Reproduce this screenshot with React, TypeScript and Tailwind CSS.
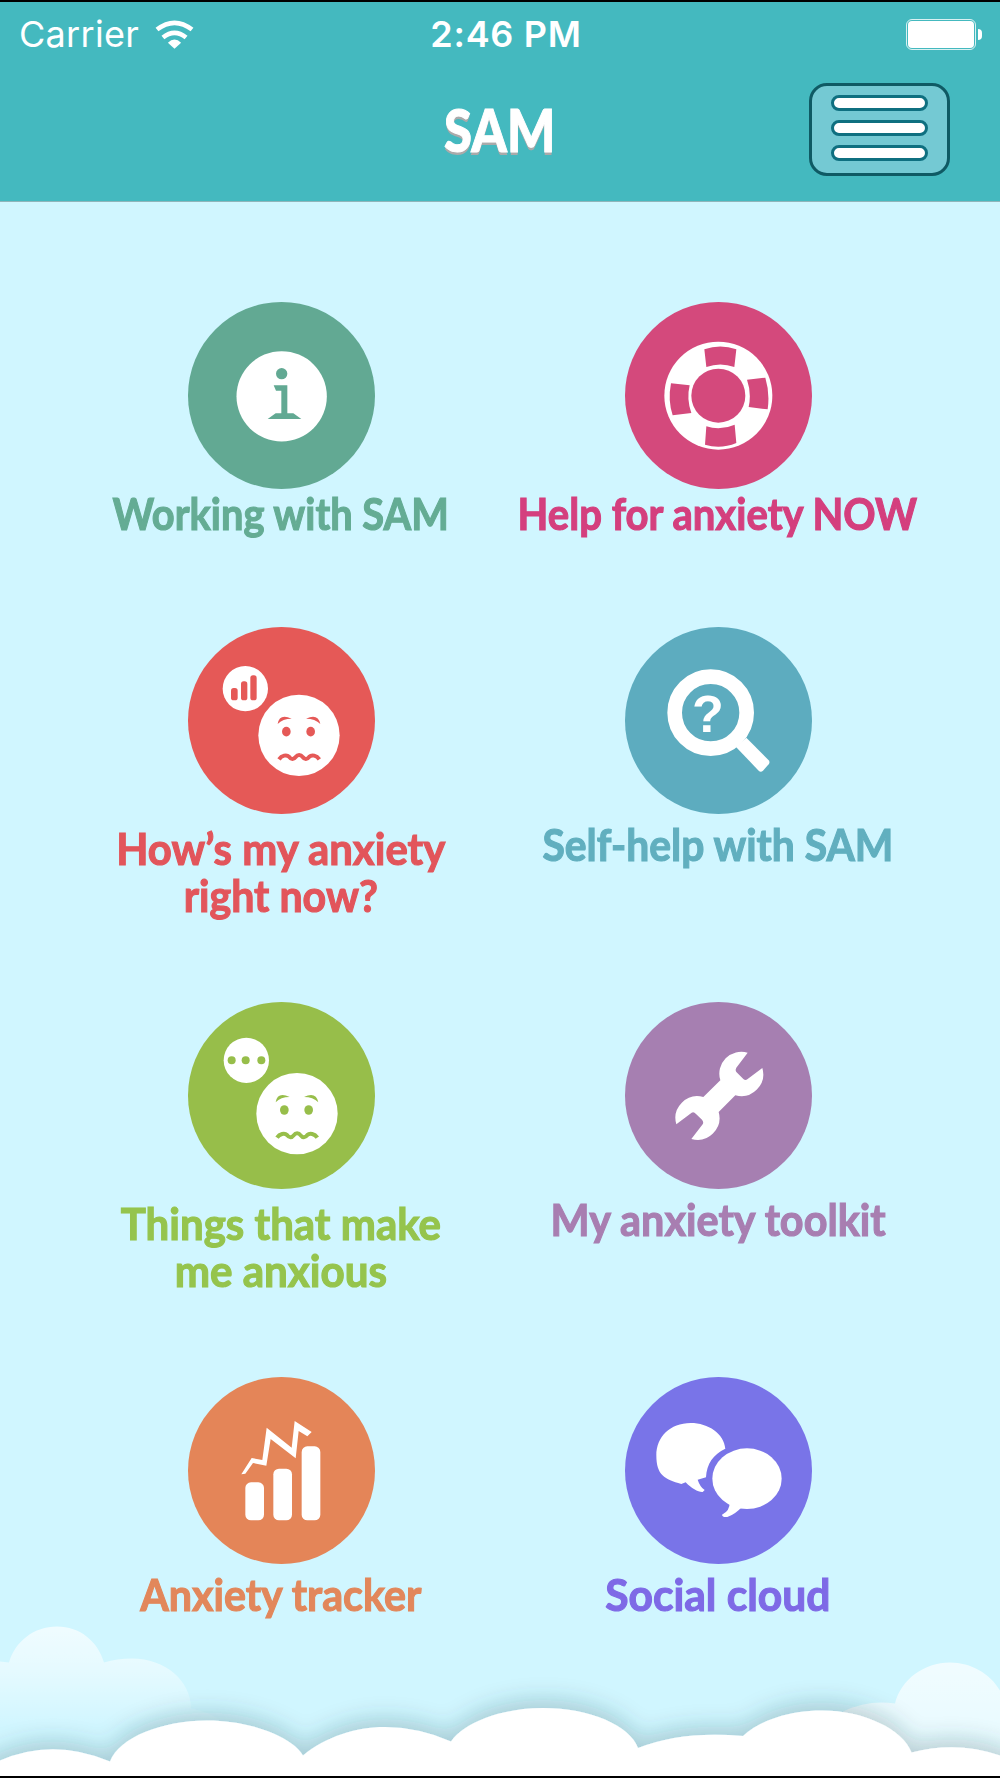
import type { ReactNode } from "react";

function WorriedFace({ color }: { color: string }) {
  return (
    <g>
      <circle cx="597" cy="375" r="122" fill="white" />
      <ellipse cx="559" cy="364" rx="13" ry="14.5" fill={color} />
      <ellipse cx="632" cy="364" rx="13" ry="14.5" fill={color} />
      <path d="M533 341 Q538 308 575 325 Q548 325 533 341Z" fill={color} />
      <path d="M661 341 Q654 308 618 325 Q645 325 661 341Z" fill={color} />
      <path
        d="M537 447 C545 435 560 432 567 439 C574 448 581 448 587 440 C593 432 602 432 608 440 C614 448 621 448 628 439 C635 432 650 435 658 447"
        fill="none"
        stroke={color}
        strokeWidth="12"
      />
    </g>
  );
}

const infoIcon = (
  <svg viewBox="264 35 561 561" className="size-full">
    <circle cx="545" cy="318" r="135.5" fill="white" />
    <g fill="#62a993">
      <circle cx="545" cy="250" r="17" />
      <path d="M521 285 H562 V369 H580 L604 386 H503 L527 369 H544 V301 H528Z" />
    </g>
  </svg>
);

const lifebuoyIcon = (
  <svg viewBox="376 35 561 561" className="size-full">
    <circle cx="656" cy="316" r="162" fill="white" />
    <g fill="#d4497c">
      <circle cx="656" cy="316" r="81" />
      <path d="M614 177 Q662 160 710 177 L704 230 Q662 215 620 230Z" />
      <path d="M742 268 L797 262 Q811 308 804 357 L747 350 Q756 308 742 268Z" />
      <path d="M620 408 Q662 422 705 403 L710 458 Q662 478 616 463Z" />
      <path d="M514 279 L570 285 Q560 326 575 368 L519 375 Q504 330 514 279Z" />
    </g>
  </svg>
);

const anxietyNowIcon = (
  <svg viewBox="264 50 561 561" className="size-full">
    <circle cx="436" cy="235" r="68" fill="white" />
    <g fill="#e55957">
      <rect x="393" y="233" width="20" height="37" rx="8" />
      <rect x="423" y="213" width="19" height="57" rx="8" />
      <rect x="451" y="195" width="19" height="75" rx="8" />
    </g>
    <WorriedFace color="#e55957" />
  </svg>
);

const searchIcon = (
  <svg viewBox="315 50 561 561" className="size-full">
    <circle cx="572" cy="307" r="108" fill="none" stroke="white" strokeWidth="44" />
    <path d="M679 382 L746 450 Q751 456 746 462 L729 481 Q722 487 716 481 L648 410Z" fill="white" />
    <text
      x="564"
      y="366"
      textAnchor="middle"
      fill="white"
      className="font-['Liberation_Sans',sans-serif] text-[156px] font-bold"
    >
      ?
    </text>
  </svg>
);

const thingsIcon = (
  <svg viewBox="264 35 561 561" className="size-full">
    <circle cx="439" cy="210" r="68" fill="white" />
    <g fill="#97be4a">
      <circle cx="395" cy="210" r="12" />
      <circle cx="437" cy="210" r="12" />
      <circle cx="484" cy="210" r="12" />
    </g>
    <g transform="translate(-6 -5)">
      <WorriedFace color="#97be4a" />
    </g>
  </svg>
);

const wrenchIcon = (
  <svg viewBox="315 35 561 561" className="size-full">
    <path
      d="M683 187 A66 66 0 0 0 601 270 L550 320 A66 66 0 0 0 469 402 L515 367 Q522 364 528 371 L546 388 Q552 395 548 402 L514 446 A66 66 0 0 0 596 365 L646 315 A66 66 0 0 0 727 233 L682 267 Q676 271 670 266 L649 245 Q645 239 649 232Z"
      fill="white"
    />
  </svg>
);

const trackerIcon = (
  <svg viewBox="264 50 561 561" className="size-full">
    <g fill="white">
      <rect x="436" y="366" width="56" height="114" rx="17" />
      <rect x="520" y="325" width="56" height="155" rx="17" />
      <rect x="605" y="258" width="56" height="222" rx="17" />
      <path d="M424 342 L455 293 L487 299 L500 202 L575 262 L584 182 L635 215 L622 228 L596 212 L587 294 L512 236 L499 316 L459 308 L436 340Z" />
    </g>
  </svg>
);

const socialIcon = (
  <svg viewBox="315 50 561 561" className="size-full">
    <g fill="white">
      <path d="M616 265 C612 220 565 188 512 188 C450 188 409 230 409 285 C409 345 434 357 484 371 L497 366 C515 385 535 396 548 395 L554 389 Q540 380 533 358 L558 351 C560 310 580 282 616 265Z" />
      <ellipse cx="681" cy="355" rx="104" ry="91" />
      <path d="M629 425 Q630 452 606 463 Q607 472 622 470 Q645 463 668 438Z" />
    </g>
  </svg>
);

type Line = { text: string; scale: string };

type MenuItem = {
  circle: string;
  label: string;
  lines: Line[];
  icon: ReactNode;
};

const menuItems: MenuItem[] = [
  {
    circle: "bg-[#62a993]",
    label: "mt-[1.5px] text-[#64ac94]",
    lines: [{ text: "Working with SAM", scale: "scale-x-[0.926]" }],
    icon: infoIcon,
  },
  {
    circle: "bg-[#d4497c]",
    label: "mt-[1.5px] text-[#d43f7e]",
    lines: [{ text: "Help for anxiety NOW", scale: "scale-x-[0.932]" }],
    icon: lifebuoyIcon,
  },
  {
    circle: "bg-[#e55957]",
    label: "mt-[11px] text-[#e2555b]",
    lines: [
      { text: "How’s my anxiety", scale: "scale-x-[0.975]" },
      { text: "right now?", scale: "scale-x-[0.957]" },
    ],
    icon: anxietyNowIcon,
  },
  {
    circle: "bg-[#5dacbf]",
    label: "mt-[7px] text-[#61afbf]",
    lines: [{ text: "Self-help with SAM", scale: "scale-x-[0.949]" }],
    icon: searchIcon,
  },
  {
    circle: "bg-[#97be4a]",
    label: "mt-[11px] text-[#95c44d]",
    lines: [
      { text: "Things that make", scale: "scale-x-[0.977]" },
      { text: "me anxious", scale: "scale-x-[0.98]" },
    ],
    icon: thingsIcon,
  },
  {
    circle: "bg-[#a67fb1]",
    label: "mt-[7px] text-[#a87eb1]",
    lines: [{ text: "My anxiety toolkit", scale: "scale-x-[0.962]" }],
    icon: wrenchIcon,
  },
  {
    circle: "bg-[#e48558]",
    label: "mt-[7px] text-[#e2875b]",
    lines: [{ text: "Anxiety tracker", scale: "scale-x-[0.958]" }],
    icon: trackerIcon,
  },
  {
    circle: "bg-[#7974e8]",
    label: "mt-[7px] text-[#7e6ae6]",
    lines: [{ text: "Social cloud", scale: "scale-x-[0.99]" }],
    icon: socialIcon,
  },
];

function StatusBar() {
  return (
    <div className="grid h-16 grid-cols-3 items-center font-['Inter',sans-serif] text-[36px] leading-none text-white">
      <div className="flex items-center gap-4 pl-[19px]">
        <span className="font-normal tracking-[0.3px]">Carrier</span>
        <svg viewBox="468 50 118 92" className="h-[31px] w-[39px]">
          <g fill="none" stroke="white" strokeWidth="14">
            <path d="M474 81 Q527 40 580 81" />
            <path d="M492 105 Q527 77 562 105" />
          </g>
          <path d="M507 121 Q527 102 547 121 L527 139Z" fill="white" />
        </svg>
      </div>
      <span className="pl-3 text-center font-semibold tracking-[0.7px]">2:46 PM</span>
      <div className="flex items-center justify-end gap-0.5 pr-[18px]">
        <div className="h-[31px] w-[70px] rounded-md border border-white/80 p-px">
          <div className="size-full rounded-[4px] bg-white" />
        </div>
        <div className="h-[11px] w-1 rounded-r-full bg-white" />
      </div>
    </div>
  );
}

function MenuButton() {
  return (
    <button className="flex h-[93px] w-[141px] flex-col items-center justify-between rounded-[18px] border-[3px] border-[#0f5a64] bg-[#74c9d3] pt-[9px] pb-3">
      {[0, 1, 2].map((n) => (
        <span
          key={n}
          className="h-4 w-[97px] rounded-full border-[3px] border-[#0f7080] bg-white"
        />
      ))}
    </button>
  );
}

function Clouds() {
  return (
    <svg viewBox="0 1615.5 1000 160" className="h-[160px] w-full">
      <defs>
        <linearGradient id="leftCloud" gradientUnits="userSpaceOnUse" x1="0" y1="1626" x2="0" y2="1728">
          <stop offset="0" stopColor="white" stopOpacity="0.68" />
          <stop offset="0.4" stopColor="white" stopOpacity="0.48" />
          <stop offset="1" stopColor="white" stopOpacity="0" />
        </linearGradient>
        <linearGradient id="rightCloud" gradientUnits="userSpaceOnUse" x1="0" y1="1662" x2="0" y2="1770">
          <stop offset="0" stopColor="white" stopOpacity="0.7" />
          <stop offset="1" stopColor="white" stopOpacity="0.45" />
        </linearGradient>
        <filter id="cloudShadow" x="-10%" y="-100%" width="120%" height="300%">
          <feDropShadow dx="0" dy="-8" stdDeviation="11" floodColor="#2a4a52" floodOpacity="0.24" />
        </filter>
      </defs>
      <path
        d="M0 1661 L9 1662 C15 1641 34 1626 57 1626 C80 1626 98 1641 104 1662 Q117 1658 132 1658 C165 1658 191 1680 191 1708 Q208 1711 221 1720 V1776 H0Z"
        fill="url(#leftCloud)"
      />
      <path
        d="M843 1711 Q868 1699 895 1703 C901 1679 924 1662 950 1662 C971 1662 990 1673 1000 1690 V1776 H843Z"
        fill="url(#rightCloud)"
      />
      <path
        d="M-60 1790 L0 1760 Q53 1737 110 1761 C119 1737 162 1720 207 1720 C252 1720 293 1737 303 1755 C326 1736 356 1726.5 385 1726.5 Q420 1727 451 1741 C463 1723 500 1707.5 543 1707.5 C590 1707.5 630 1725 638 1747.5 Q682 1730 743 1735.5 C760 1720 789 1710 822 1710 C864 1710 903 1729 911.5 1752 Q957 1740 1000 1755 L1060 1790Z"
        fill="white"
        filter="url(#cloudShadow)"
      />
    </svg>
  );
}

export default function App() {
  return (
    <div className="flex h-[1778px] w-[1000px] flex-col overflow-hidden border-y-2 border-black bg-[#d0f6ff]">
      <header className="h-[200px] shrink-0 border-b border-[#8fb5ba] bg-[#44b9bf]">
        <StatusBar />
        <div className="grid h-[126px] grid-cols-3 items-center">
          <h1 className="col-start-2 scale-x-[0.86] text-center font-['Lato',sans-serif] text-[59px] leading-none font-black text-white [-webkit-text-stroke:1px] [text-shadow:0_3px_0_#aaa]">
            SAM
          </h1>
          <div className="flex justify-end pr-[50px]">
            <MenuButton />
          </div>
        </div>
      </header>

      <main className="grid shrink-0 grid-cols-2 grid-rows-[325px_375px_375px_239.5px] px-[63px] pt-[99.5px]">
        {menuItems.map((item) => (
          <a key={item.lines[0].text} className="flex flex-col items-center">
            <div className={`size-[187px] shrink-0 rounded-full ${item.circle}`}>{item.icon}</div>
            <div
              className={`pr-[1.5px] text-center font-['Lato',sans-serif] text-[43px] leading-[47px] font-bold whitespace-nowrap [-webkit-text-stroke:1.1px] ${item.label}`}
            >
              {item.lines.map((line) => (
                <span key={line.text} className={`block ${line.scale}`}>
                  {line.text}
                </span>
              ))}
            </div>
          </a>
        ))}
      </main>

      <Clouds />
    </div>
  );
}
